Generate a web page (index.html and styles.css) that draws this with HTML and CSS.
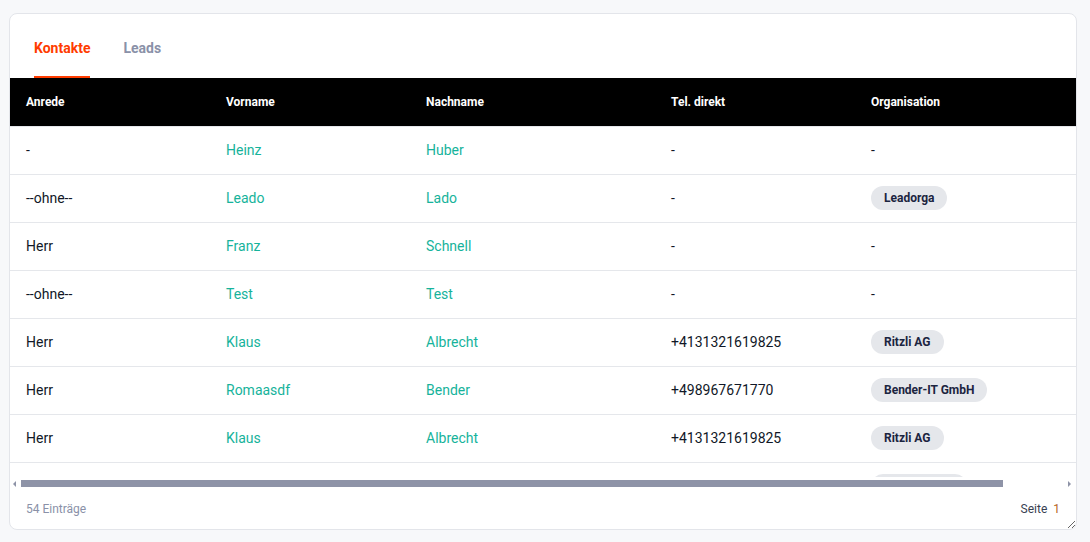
FILE: index.html
```html
<!DOCTYPE html>
<html lang="de">
<head>
    <meta charset="UTF-8">
    <meta name="viewport" content="width=device-width, initial-scale=1.0">
    <title>Kontakte</title>
    <link rel="stylesheet" href="styles.css">
</head>
<body>
    <div class="card">
        <nav class="tabs">
            <a class="tab active" href="#">Kontakte</a>
            <a class="tab" href="#">Leads</a>
        </nav>

        <div class="table-scroll">
            <table class="contact-table">
                <thead>
                    <tr>
                        <th class="col-anrede">Anrede</th>
                        <th class="col-vorname">Vorname</th>
                        <th class="col-nachname">Nachname</th>
                        <th class="col-tel">Tel. direkt</th>
                        <th class="col-org">Organisation</th>
                    </tr>
                </thead>
                <tbody>
                    <tr>
                        <td>-</td>
                        <td><a href="#">Heinz</a></td>
                        <td><a href="#">Huber</a></td>
                        <td>-</td>
                        <td>-</td>
                    </tr>
                    <tr>
                        <td>--ohne--</td>
                        <td><a href="#">Leado</a></td>
                        <td><a href="#">Lado</a></td>
                        <td>-</td>
                        <td><span class="badge">Leadorga</span></td>
                    </tr>
                    <tr>
                        <td>Herr</td>
                        <td><a href="#">Franz</a></td>
                        <td><a href="#">Schnell</a></td>
                        <td>-</td>
                        <td>-</td>
                    </tr>
                    <tr>
                        <td>--ohne--</td>
                        <td><a href="#">Test</a></td>
                        <td><a href="#">Test</a></td>
                        <td>-</td>
                        <td>-</td>
                    </tr>
                    <tr>
                        <td>Herr</td>
                        <td><a href="#">Klaus</a></td>
                        <td><a href="#">Albrecht</a></td>
                        <td>+4131321619825</td>
                        <td><span class="badge">Ritzli AG</span></td>
                    </tr>
                    <tr>
                        <td>Herr</td>
                        <td><a href="#">Romaasdf</a></td>
                        <td><a href="#">Bender</a></td>
                        <td>+498967671770</td>
                        <td><span class="badge">Bender-IT GmbH</span></td>
                    </tr>
                    <tr>
                        <td>Herr</td>
                        <td><a href="#">Klaus</a></td>
                        <td><a href="#">Albrecht</a></td>
                        <td>+4131321619825</td>
                        <td><span class="badge">Ritzli AG</span></td>
                    </tr>
                    <tr class="row-peek">
                        <td></td>
                        <td></td>
                        <td></td>
                        <td></td>
                        <td><span class="badge badge-peek"></span></td>
                    </tr>
                </tbody>
            </table>
        </div>

        <!-- horizontal scrollbar of the table -->
        <div class="hscroll">
            <span class="arrow arrow-left"></span>
            <div class="hscroll-track">
                <div class="hscroll-thumb"></div>
            </div>
            <span class="arrow arrow-right"></span>
        </div>

        <footer class="card-footer">
            <span class="count">54 Einträge</span>
            <span class="pager">Seite <span class="page-num">1</span></span>
        </footer>
    </div>
</body>
</html>
```

FILE: styles.css
```css
body {
    font-family: Roboto, "Liberation Sans", sans-serif;
    background-color: #f7f8fa;
    margin: 0;
    padding: 13px 0 0 9px;
    color: #111827;
}

.card {
    width: 1066px;
    height: 515px;
    background-color: #ffffff;
    border: 1px solid #e3e5ea;
    border-radius: 8px;
    display: flex;
    flex-direction: column;
    overflow: hidden;
    resize: both;
}

.tabs {
    display: flex;
    gap: 33px;
    padding: 0 24px;
    height: 64px;
    flex-shrink: 0;
}

.tab {
    padding-top: 24px;
    line-height: 20px;
    font-size: 14px;
    font-weight: 700;
    color: #8a91a8;
    text-decoration: none;
    border-bottom: 2px solid transparent;
    box-sizing: border-box;
}

.tab.active {
    color: #ff3c00;
    border-bottom-color: #ff3c00;
}

.table-scroll {
    height: 399px;
    flex-shrink: 0;
    overflow: hidden;
}

.contact-table {
    width: 1131px;
    border-collapse: collapse;
    table-layout: fixed;
}

.contact-table th {
    background-color: #000000;
    color: #ffffff;
    font-size: 12px;
    font-weight: 700;
    text-align: left;
    height: 48px;
    padding: 0 16px;
    border-bottom: 1px solid #e5e7eb;
}

.contact-table td {
    height: 46px;
    padding: 0 16px 1px;
    font-size: 14px;
    text-align: left;
    border-bottom: 1px solid #e5e7eb;
    color: #111827;
}

.contact-table td a {
    color: #16b39b;
    text-decoration: none;
}

.contact-table .row-peek td {
    vertical-align: top;
    padding-top: 11px;
    border-bottom: none;
}

.col-anrede { width: 168px; }
.col-vorname { width: 168px; }
.col-nachname { width: 213px; }
.col-tel { width: 168px; }
.col-org { width: 254px; }

.badge {
    display: inline-block;
    height: 24px;
    line-height: 24px;
    padding: 0 13px;
    border-radius: 12px;
    background-color: #e5e7eb;
    color: #1b2440;
    font-size: 12px;
    font-weight: 700;
}

.badge-peek {
    width: 70px;
}

.hscroll {
    height: 13px;
    flex-shrink: 0;
    display: flex;
    align-items: center;
    padding: 0 5px 0 3px;
}

.hscroll-track {
    flex: 1;
    margin: 0 5px;
}

.hscroll-thumb {
    width: 982px;
    height: 7px;
    background-color: #8e93a7;
}

.arrow {
    width: 0;
    height: 0;
    border-top: 3px solid transparent;
    border-bottom: 3px solid transparent;
}

.arrow-left {
    border-right: 3px solid #8e93a7;
}

.arrow-right {
    border-left: 3px solid #8e93a7;
}

.card-footer {
    flex: 1;
    display: flex;
    align-items: center;
    justify-content: space-between;
    padding: 0 16px 1px;
    font-size: 12px;
}

.count {
    color: #8a91a8;
}

.pager {
    color: #374151;
}

.page-num {
    color: #b5651d;
    margin-left: 3px;
}
```
